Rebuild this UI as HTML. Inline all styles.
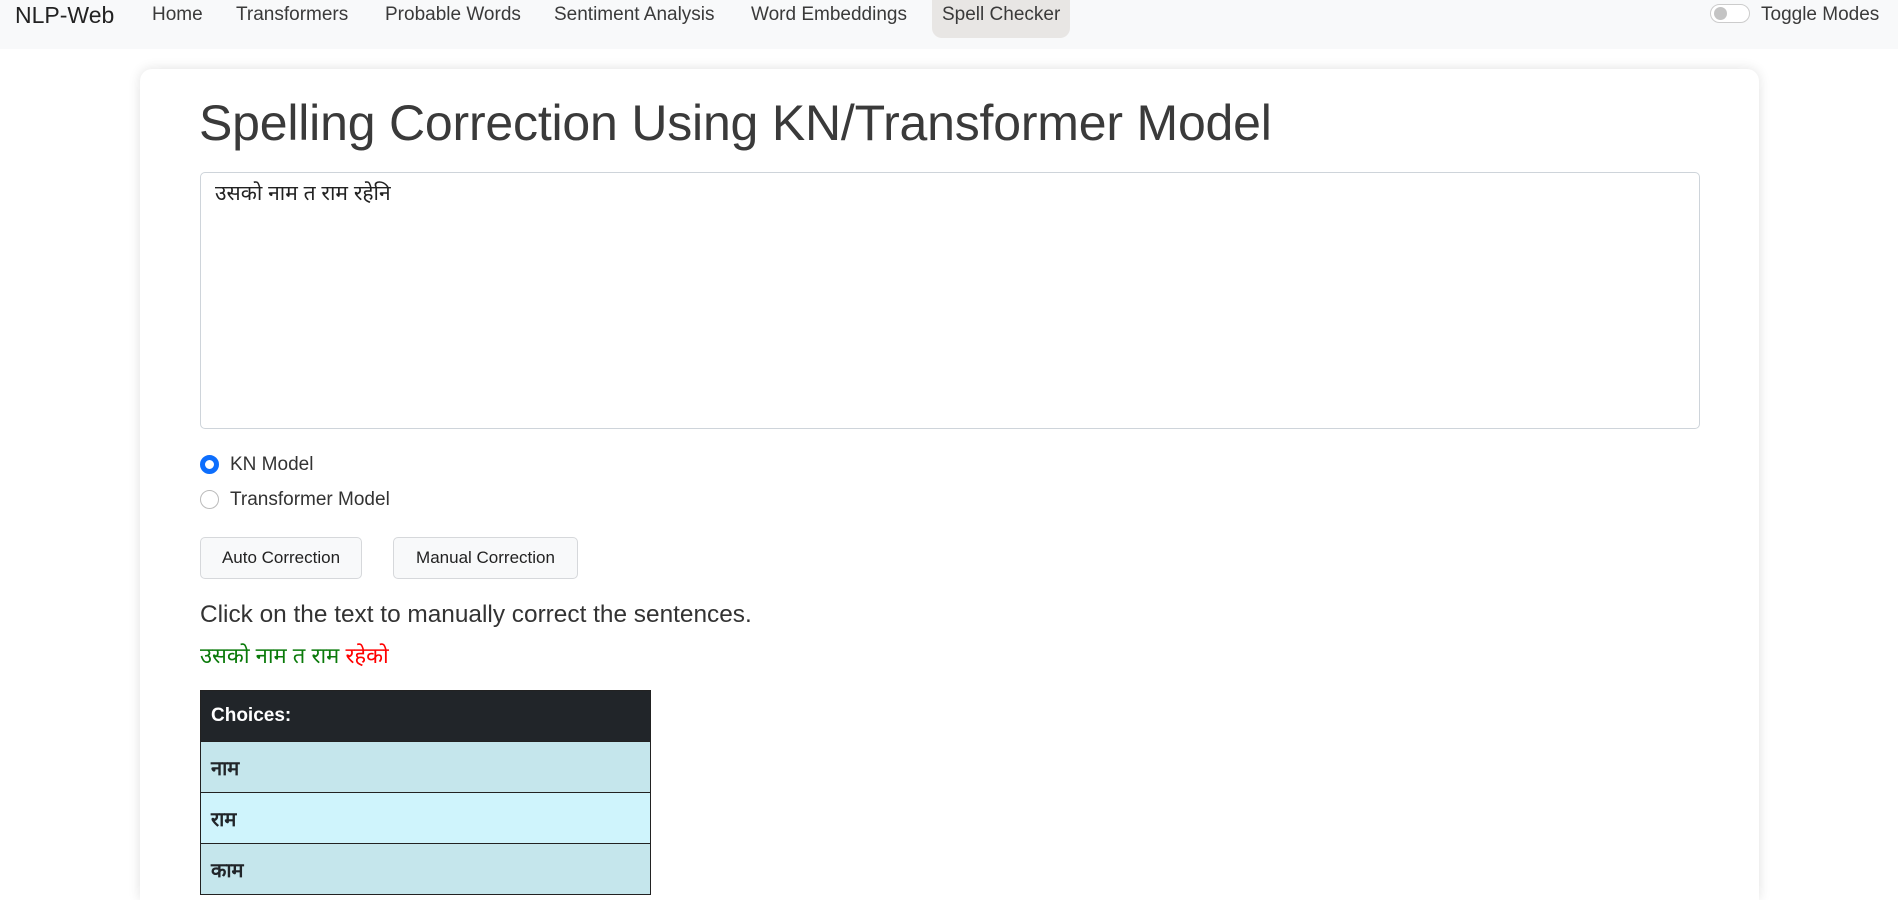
<!DOCTYPE html>
<html><head><meta charset="utf-8"><style>
*{box-sizing:border-box;margin:0;padding:0}
html,body{width:1898px;height:900px;overflow:hidden}
body{background:#fff;font-family:"Liberation Sans","Noto Sans CJK SC",sans-serif;color:#212529;position:relative}
.nav{position:absolute;left:0;top:0;width:1898px;height:49px;background:#f8f9fa}
.nav span{position:absolute;top:4px;font-size:19px;color:#3a3a3a;line-height:22px}
.brand{left:15px;font-size:23px!important;top:2px!important;line-height:26px!important;color:#222!important}
.active{background:#e8e6e4;border-radius:0 0 10px 10px;height:38px;top:0!important;padding:4px 10px 0;}
.tog{position:absolute;left:1710px;top:4px;width:40px;height:19px;border:1px solid #ccc;border-radius:10px;background:#fff}
.tog i{position:absolute;left:3px;top:2px;width:13px;height:13px;border-radius:50%;background:#c4c4c4}
.card{position:absolute;left:140px;top:69px;width:1619px;height:831px;border-radius:12px 12px 0 0;box-shadow:0 0 12px rgba(0,0,0,.12);background:#fff}
h1{position:absolute;left:199px;top:92px;font-size:50px;font-weight:300;color:#3a3a3a;line-height:62px;letter-spacing:-.2px}
.ta{position:absolute;left:200px;top:172px;width:1500px;height:257px;border:1px solid #ced4da;border-radius:5px;padding:6px 14px;font-size:21px;font-family:"Liberation Sans",sans-serif;color:#222}
.r{position:absolute;left:200px;width:19px;height:19px;border-radius:50%;border:1px solid #bbb}
.r.on{border:5px solid #0d6efd}
.rl{position:absolute;left:230px;font-size:19px;color:#333}
.btn{position:absolute;top:537px;height:42px;border:1px solid #d6d8db;border-radius:5px;background:#f8f9fa;font-size:17px;text-align:center;line-height:40px;color:#222}
.click{position:absolute;left:200px;top:601px;font-size:24.4px;font-weight:300;color:#333}
.dev{position:absolute;left:200px;top:640px;font-size:22px}
table{position:absolute;left:200px;top:690px;width:451px;border-collapse:collapse;border:1px solid #222}
td{height:51px;border-top:1px solid #222;padding-left:10px;font-weight:bold;font-size:20px}
</style></head><body>
<div class="nav">
<span class="brand">NLP-Web</span>
<span style="left:152px">Home</span>
<span style="left:236px">Transformers</span>
<span style="left:385px">Probable Words</span>
<span style="left:554px">Sentiment Analysis</span>
<span style="left:751px">Word Embeddings</span>
<span class="active" style="left:932px">Spell Checker</span>
<div class="tog"><i></i></div>
<span style="left:1761px">Toggle Modes</span>
</div>
<div class="card"></div>
<h1>Spelling Correction Using KN/Transformer Model</h1>
<div class="ta">उसको नाम त राम रहेनि</div>
<div class="r on" style="top:455px"></div><div class="rl" style="top:454px">KN Model</div>
<div class="r" style="top:490px"></div><div class="rl" style="top:489px">Transformer Model</div>
<div class="btn" style="left:200px;width:162px">Auto Correction</div>
<div class="btn" style="left:393px;width:185px">Manual Correction</div>
<div class="click">Click on the text to manually correct the sentences.</div>
<div class="dev"><span style="color:#0a7a0a">उसको नाम त राम </span><span style="color:#f00">रहेको</span></div>
<table>
<tr><td style="background:#212529;color:#fff;border:none;font-size:19px">Choices:</td></tr>
<tr><td style="background:#c5e6ec">नाम</td></tr>
<tr><td style="background:#cff4fc">राम</td></tr>
<tr><td style="background:#c5e6ec">काम</td></tr>
</table>
</body></html>
